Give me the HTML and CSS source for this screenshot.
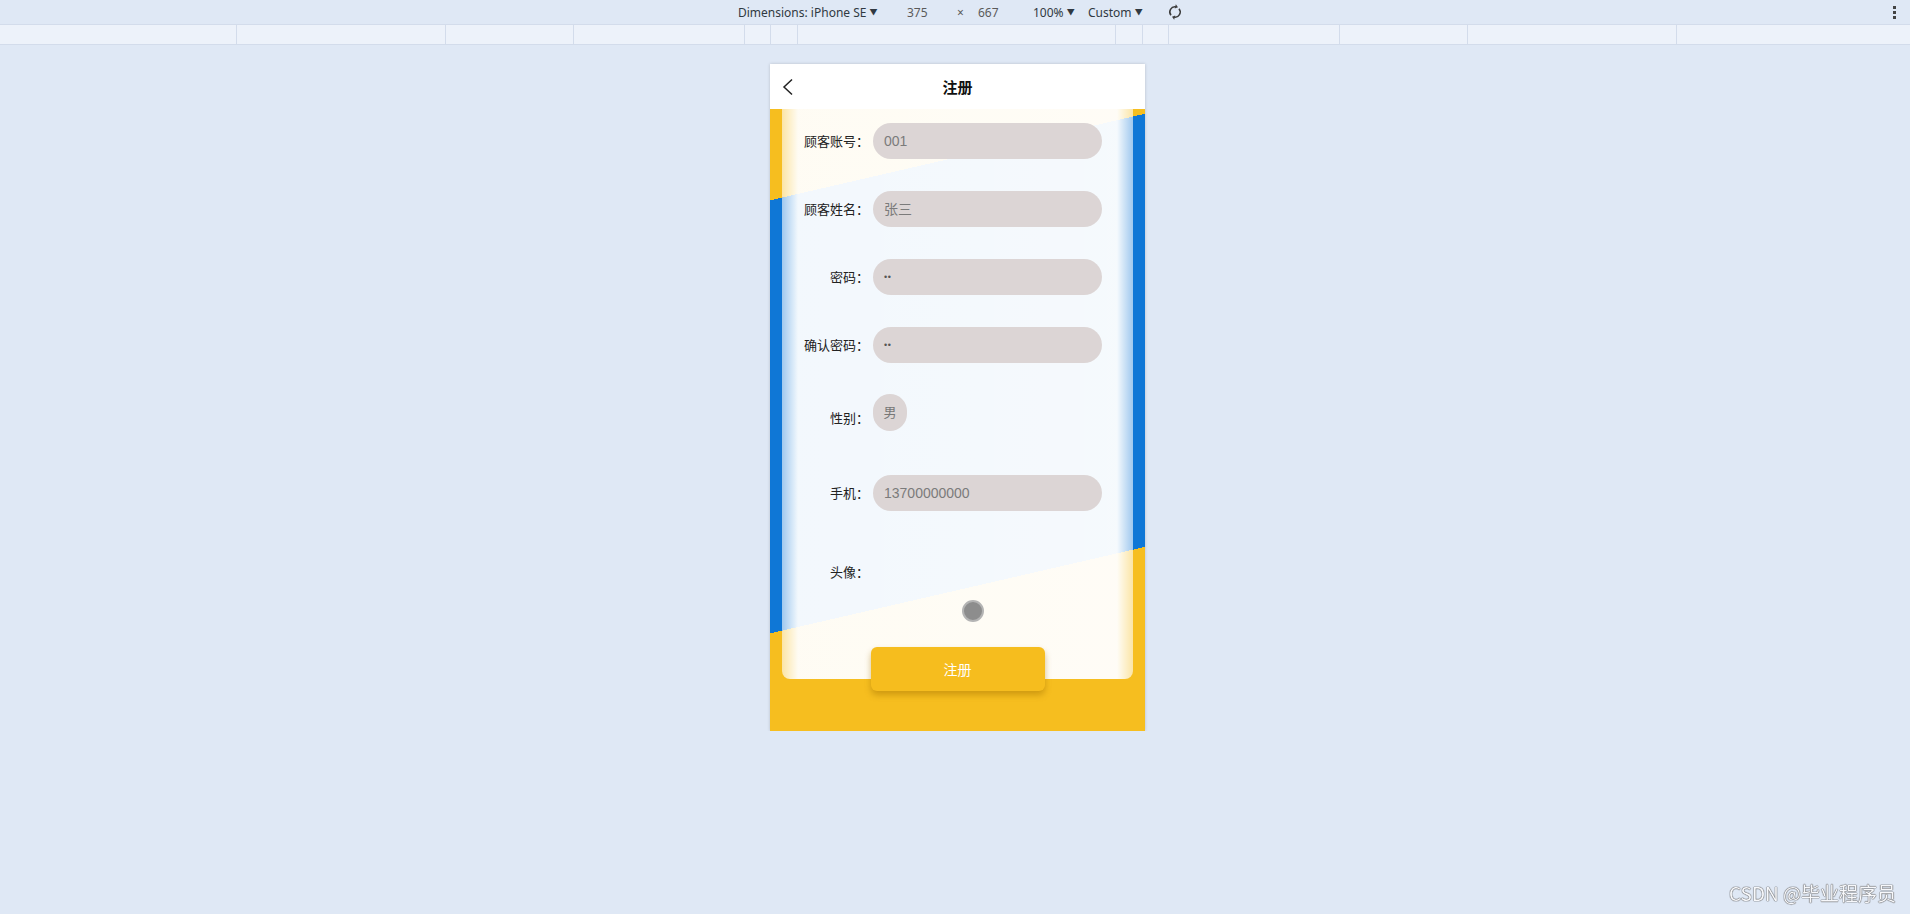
FILE: index.html
```html
<!DOCTYPE html>
<html>

<head>
    <meta charset="utf-8">
    <link rel="stylesheet" href="styles.css">
    <title>注册</title>
</head>

<body>
    <div class="devtools">
        <div class="toolbar">
            <div class="device-controls">
                <span class="ctl ctl-dim">Dimensions: iPhone SE <i class="caret">▼</i></span>
                <span class="ctl ctl-w">375</span>
                <span class="ctl ctl-x">×</span>
                <span class="ctl ctl-h">667</span>
                <span class="ctl ctl-zoom">100% <i class="caret">▼</i></span>
                <span class="ctl ctl-throttle">Custom <i class="caret">▼</i></span>
                <svg class="rotate" viewBox="0 0 16 16" width="16" height="16">
                    <g fill="none" stroke="#3c3c3c" stroke-width="1.5" transform="rotate(-40 8 8)">
                        <path d="M2.8 8a5.2 5.2 0 0 1 9.2-3.3" />
                        <path d="M13.2 8a5.2 5.2 0 0 1-9.2 3.3" />
                    </g>
                    <g fill="#3c3c3c" transform="rotate(-40 8 8)">
                        <path d="M13.6 2.6l-0.2 3.6-3.4-1z" />
                        <path d="M2.4 13.4l0.2-3.6 3.4 1z" />
                    </g>
                </svg>
            </div>
            <div class="more"><i></i><i></i><i></i></div>
        </div>
        <div class="mq-bar">
            <span class="seg s1"></span>
            <span class="seg s2"></span>
            <span class="seg s3"></span>
            <span class="seg s4"></span>
            <span class="seg s5"></span>
            <span class="seg s6"></span>
            <span class="seg s7"></span>
            <span class="seg s6"></span>
            <span class="seg s5"></span>
            <span class="seg s4"></span>
            <span class="seg s3"></span>
            <span class="seg s2"></span>
            <span class="seg s1 last"></span>
        </div>
    </div>

    <div class="stage">
        <div class="phone">
            <header class="nav">
                <a class="back">
                    <svg viewBox="0 0 12 18" width="12" height="18">
                        <polyline points="10,1.5 2,9 10,16.5" fill="none" stroke="#222" stroke-width="1.5" />
                    </svg>
                </a>
                <h1>注册</h1>
                <span></span>
            </header>
            <main class="screen">
                <form class="card">
                    <div class="row r1">
                        <label>顾客账号：</label>
                        <div class="field">001</div>
                    </div>
                    <div class="row">
                        <label>顾客姓名：</label>
                        <div class="field">张三</div>
                    </div>
                    <div class="row">
                        <label>密码：</label>
                        <div class="field pwd">••</div>
                    </div>
                    <div class="row">
                        <label>确认密码：</label>
                        <div class="field pwd">••</div>
                    </div>
                    <div class="row gender">
                        <label>性别：</label>
                        <div class="pill">男</div>
                    </div>
                    <div class="row phone-row">
                        <label>手机：</label>
                        <div class="field">13700000000</div>
                    </div>
                    <div class="row avatar-row">
                        <label>头像：</label>
                    </div>
                    <div class="avatar"></div>
                    <button type="button" class="submit">注册</button>
                </form>
            </main>
        </div>
    </div>

    <div class="watermark">CSDN @毕业程序员</div>
</body>

</html>
```

FILE: styles.css
```css
html {
    background: #dfe8f5;
    height: 100%;
    overflow: hidden;
}

body {
    margin: 0;
    font-family: "Noto Sans", "Noto Sans CJK SC", sans-serif;
    color: #222;
}

/* devtools device toolbar */
.toolbar {
    height: 24px;
    display: flex;
    align-items: center;
    padding-left: 738px;
    background: #dfe8f5;
    font-size: 12px;
    color: #303942;
}

.device-controls {
    display: flex;
    align-items: center;
}

.ctl {
    display: inline-block;
    white-space: nowrap;
}

.ctl-dim {
    width: 169px;
}

.ctl-w {
    width: 50px;
    color: #5a5a5a;
}

.ctl-x {
    width: 21px;
    color: #5a5a5a;
}

.ctl-h {
    width: 55px;
    color: #5a5a5a;
}

.ctl-zoom {
    width: 55px;
}

.ctl-throttle {
    width: 79px;
}

.caret {
    font-style: normal;
    font-size: 8px;
    vertical-align: 2px;
}

.rotate {
    display: block;
}

.more {
    margin-left: auto;
    margin-right: 14px;
    display: flex;
    flex-direction: column;
    gap: 2px;
}

.more i {
    display: block;
    width: 3px;
    height: 3px;
    background: #444;
}

.mq-bar {
    height: 19px;
    display: flex;
    background: #edf2fa;
    border-top: 1px solid #d3dceb;
    border-bottom: 1px solid #d3dceb;
}

.seg {
    border-right: 1px solid #d3dceb;
    flex: none;
}

.s1 { width: 236px; }
.s2 { width: 208px; }
.s3 { width: 127px; }
.s4 { width: 170px; }
.s5 { width: 25px; }
.s6 { width: 26px; }
.s7 { width: 317px; }

.seg.last {
    border-right: none;
    flex: 1;
}

/* phone */
.stage {
    display: flex;
    justify-content: center;
    padding: 19px 0 0 5px;
}

.phone {
    width: 375px;
    height: 667px;
    box-shadow: 0 0 3px rgba(0, 0, 0, 0.18);
    display: flex;
    flex-direction: column;
}

.nav {
    height: 45px;
    background: #fff;
    display: grid;
    grid-template-columns: 45px 1fr 45px;
    align-items: center;
}

.back {
    padding-left: 12px;
    display: flex;
}

.nav h1 {
    margin: 0;
    text-align: center;
    font-size: 15px;
    font-weight: bold;
    font-family: "Noto Sans CJK SC", sans-serif;
    color: #111;
}

.screen {
    flex: 1;
    padding: 0 12px;
    background: linear-gradient(167deg, #f6be1f 89px, #0f77d6 89px, #0f77d6 511px, #f6be1f 511px);
}

.card {
    display: flex;
    flex-direction: column;
    margin: 0;
    border-radius: 0 0 8px 8px;
    background: linear-gradient(to right,
            rgba(255, 255, 255, 0.6),
            rgba(255, 255, 255, 0.95) 16px,
            rgba(255, 255, 255, 0.96) calc(100% - 16px),
            rgba(255, 255, 255, 0.6));
}

.row {
    display: flex;
    align-items: center;
    margin-top: 32px;
}

.row.r1 {
    margin-top: 14px;
}

.row label {
    width: 87px;
    text-align: right;
    font-size: 13px;
    line-height: 18px;
    font-family: "Noto Sans CJK SC", sans-serif;
    color: #222;
}

.field {
    margin-left: 4px;
    width: 229px;
    height: 36px;
    box-sizing: border-box;
    padding: 0 11px;
    border-radius: 18px;
    background: #dcd5d5;
    font-family: "Liberation Sans", "Noto Sans CJK SC", sans-serif;
    font-size: 14px;
    line-height: 36px;
    color: #7b7b7b;
}

.field.pwd {
    font-family: "Liberation Sans", sans-serif;
    font-size: 9px;
    color: #555;
    letter-spacing: 0.5px;
}

.row.gender {
    margin-top: 31px;
    align-items: flex-end;
}

.row.gender label {
    margin-bottom: 4px;
}

.pill {
    margin-left: 4px;
    width: 34px;
    height: 37px;
    border-radius: 17px;
    background: #dcd5d5;
    text-align: center;
    line-height: 35px;
    font-size: 13px;
    font-family: "Noto Sans CJK SC", sans-serif;
    color: #777;
}

.row.phone-row {
    margin-top: 44px;
}

.row.avatar-row {
    margin-top: 51px;
    height: 20px;
}

.avatar {
    margin: 18px 0 0 180px;
    width: 22px;
    height: 22px;
    box-sizing: border-box;
    border-radius: 50%;
    background: #8d8d8d;
    border: 2px solid #b4b4b4;
}

.submit {
    align-self: center;
    margin: 25px 0 -12px;
    width: 174px;
    height: 44px;
    border: none;
    border-radius: 6px;
    background: #f6bd1e;
    color: #fff;
    font-size: 14px;
    font-family: "Noto Sans CJK SC", sans-serif;
    box-shadow: 0 4px 6px rgba(160, 110, 0, 0.45);
}

.watermark {
    position: fixed;
    right: 14px;
    bottom: 8px;
    font-size: 19px;
    font-family: "Noto Sans CJK SC", sans-serif;
    color: #f7f8fb;
    text-shadow: 0 0 1px #555, 0 0 1px #555, 0 0 1px #666;
}
```
